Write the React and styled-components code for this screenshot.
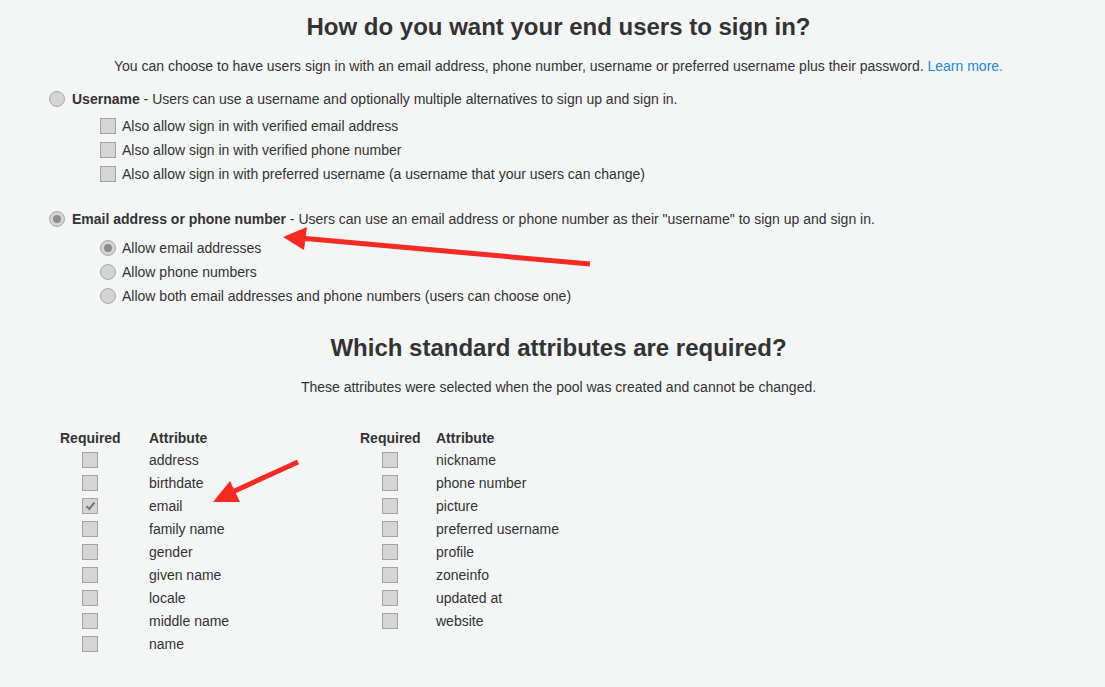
import React from "react"
import styled, { createGlobalStyle } from "styled-components"

const GlobalStyle = createGlobalStyle`
  body {
    margin: 0;
    background: #f4f5f5;
    font-family: "Liberation Sans", Helvetica, Arial, sans-serif;
    color: #333;
    font-size: 14px;
  }
`

const Page = styled.div`
  position: relative;
  width: 1105px;
  height: 687px;
  overflow: hidden;
  padding-left: 12px;
  box-sizing: border-box;
`

const Heading = styled.h2`
  margin: 0;
  padding-top: ${p => p.top || 0}px;
  text-align: center;
  font-size: 24px;
  font-weight: bold;
  line-height: 28px;
  color: #333;
`

const Lead = styled.p`
  margin: ${p => p.top || 0}px 0 0;
  text-align: center;
  font-size: 14px;
  line-height: 18px;
`

const Link = styled.a`
  color: #1a8ad6;
  text-decoration: none;
`

const Group = styled.div`
  margin: ${p => p.top || 0}px 0 0 37px;
  display: flex;
  flex-direction: column;
`

const Row = styled.label`
  display: flex;
  align-items: center;
  gap: ${p => (p.sub ? 6 : 7)}px;
  height: 24px;
  padding-left: ${p => (p.sub ? 51 : 0)}px;
  margin-top: ${p => p.gap || 0}px;
  white-space: nowrap;
`

const Radio = styled.span`
  width: 16px;
  height: 16px;
  border-radius: 50%;
  border: 1px solid #a9a9a9;
  background: #d4d4d4;
  box-sizing: border-box;
  display: flex;
  align-items: center;
  justify-content: center;
  flex-shrink: 0;
  &::after {
    content: "";
    width: 8px;
    height: 8px;
    border-radius: 50%;
    background: ${p => (p.checked ? "#8d8d8d" : "transparent")};
  }
`

const Box = styled.span`
  width: 16px;
  height: 16px;
  border: 1px solid #a3a3a3;
  background: #d5d5d5;
  box-sizing: border-box;
  display: flex;
  align-items: center;
  justify-content: center;
  flex-shrink: 0;
`

const Strong = styled.b`
  font-weight: bold;
`

const Tables = styled.div`
  display: flex;
  margin: 31px 0 0 48px;
`

const AttrTable = styled.div`
  display: grid;
  grid-template-columns: 60px auto;
  grid-template-rows: 21px;
  column-gap: ${p => p.gap}px;
  grid-auto-rows: 23px;
  width: ${p => p.width}px;
  align-items: center;
`

const HeadCell = styled.div`
  font-weight: bold;
`

const BoxCell = styled.div`
  display: flex;
  justify-content: center;
`

const Arrows = styled.svg`
  position: absolute;
  left: 0;
  top: 0;
  pointer-events: none;
`

const Check = () => (
  <svg width="11" height="10" viewBox="0 0 11 10">
    <path d="M1.5 5.2 L4.2 8 L9.5 1.5" fill="none" stroke="#777" strokeWidth="2" />
  </svg>
)

const left = ["address", "birthdate", "email", "family name", "gender", "given name", "locale", "middle name", "name"]
const right = ["nickname", "phone number", "picture", "preferred username", "profile", "zoneinfo", "updated at", "website"]

const Table = ({ items, gap, width }) => (
  <AttrTable gap={gap} width={width}>
    <HeadCell>Required</HeadCell>
    <HeadCell>Attribute</HeadCell>
    {items.map(name => (
      <React.Fragment key={name}>
        <BoxCell>
          <Box>{name === "email" && <Check />}</Box>
        </BoxCell>
        <div>{name}</div>
      </React.Fragment>
    ))}
  </AttrTable>
)

export default function App() {
  return (
    <Page>
      <GlobalStyle />
      <Heading top={13}>How do you want your end users to sign in?</Heading>
      <Lead top={16}>
        You can choose to have users sign in with an email address, phone number, username or preferred username plus their password.{" "}
        <Link href="#">Learn more.</Link>
      </Lead>

      <Group top={12}>
        <Row>
          <Radio />
          <span>
            <Strong>Username</Strong> - Users can use a username and optionally multiple alternatives to sign up and sign in.
          </span>
        </Row>
        <Row sub gap={3}>
          <Box />
          Also allow sign in with verified email address
        </Row>
        <Row sub>
          <Box />
          Also allow sign in with verified phone number
        </Row>
        <Row sub>
          <Box />
          Also allow sign in with preferred username (a username that your users can change)
        </Row>
      </Group>

      <Group top={21}>
        <Row>
          <Radio checked />
          <span>
            <Strong>Email address or phone number</Strong> - Users can use an email address or phone number as their "username" to sign up and sign in.
          </span>
        </Row>
        <Row sub gap={5}>
          <Radio checked />
          Allow email addresses
        </Row>
        <Row sub>
          <Radio />
          Allow phone numbers
        </Row>
        <Row sub>
          <Radio />
          Allow both email addresses and phone numbers (users can choose one)
        </Row>
      </Group>

      <Heading top={26}>Which standard attributes are required?</Heading>
      <Lead top={16}>These attributes were selected when the pool was created and cannot be changed.</Lead>

      <Tables>
        <Table items={left} gap={29} width={300} />
        <Table items={right} gap={16} width={300} />
      </Tables>

      <Arrows width="1105" height="687">
        <g fill="#f52a22" stroke="#f52a22">
          <line x1="590" y1="264" x2="300" y2="238" strokeWidth="5" />
          <polygon points="283,237 307,227 304,250" stroke="none" />
          <line x1="298" y1="462" x2="228" y2="494" strokeWidth="5" />
          <polygon points="213,502 230,481 240,502" stroke="none" />
        </g>
      </Arrows>
    </Page>
  )
}
